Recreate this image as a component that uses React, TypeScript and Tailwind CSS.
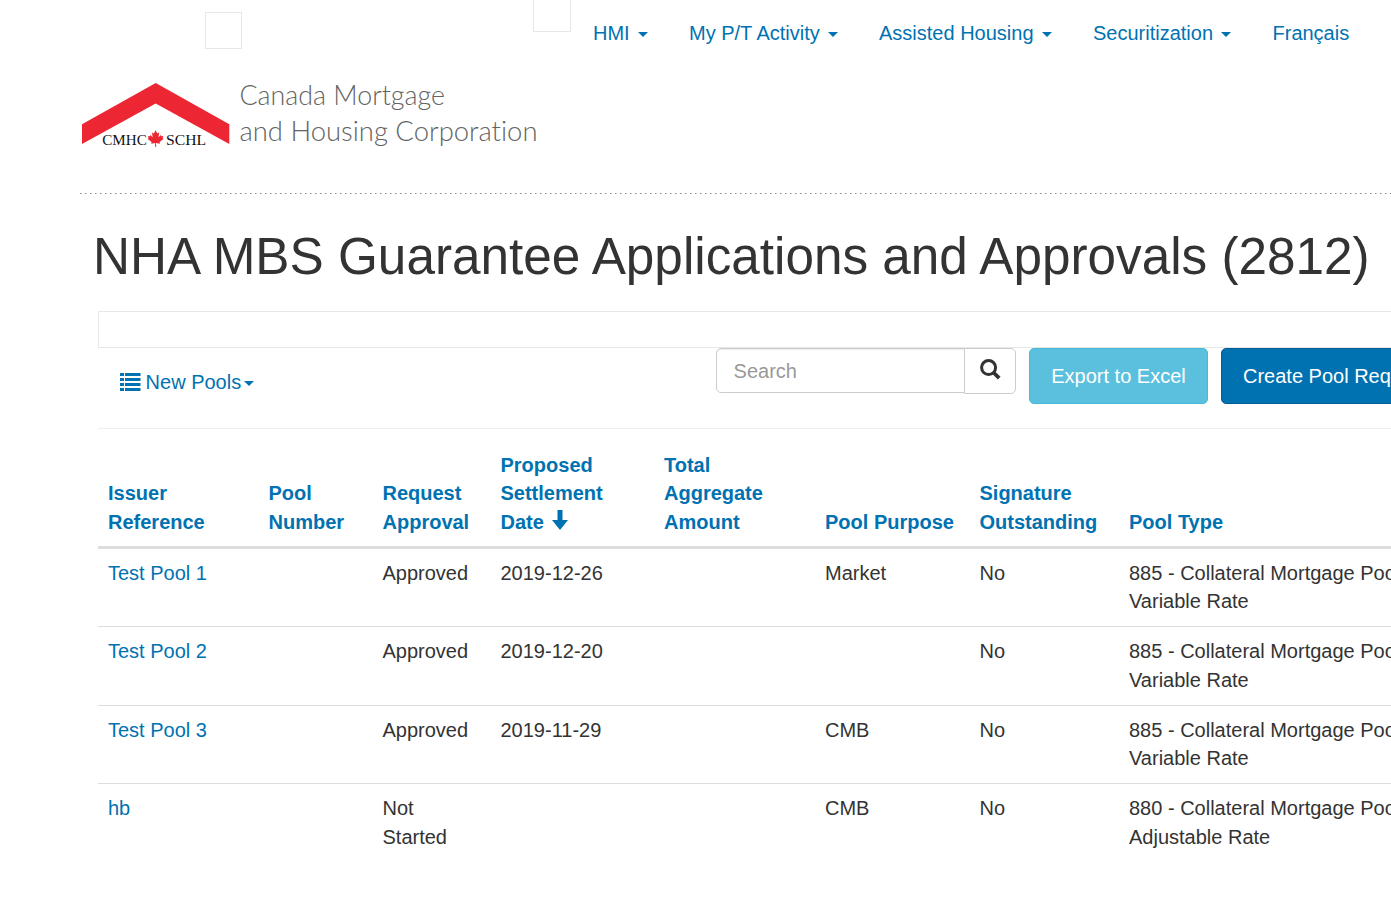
import React from "react";

const navItems = [
  { label: "HMI", menu: true, width: "w-[96px]" },
  { label: "My P/T Activity", menu: true, width: "w-[190px]" },
  { label: "Assisted Housing", menu: true, width: "w-[214px]" },
  { label: "Securitization", menu: true, width: "w-[179.5px]" },
  { label: "Français", menu: false, width: "w-[100px]" },
];

const rows = [
  { ref: "Test Pool 1", status: "Approved", date: "2019-12-26", purpose: "Market", signature: "No", type: "885 - Collateral Mortgage Pool -", rate: "Variable Rate" },
  { ref: "Test Pool 2", status: "Approved", date: "2019-12-20", purpose: "", signature: "No", type: "885 - Collateral Mortgage Pool -", rate: "Variable Rate" },
  { ref: "Test Pool 3", status: "Approved", date: "2019-11-29", purpose: "CMB", signature: "No", type: "885 - Collateral Mortgage Pool -", rate: "Variable Rate" },
  { ref: "hb", status: "Not Started", date: "", purpose: "CMB", signature: "No", type: "880 - Collateral Mortgage Pool -", rate: "Adjustable Rate" },
];

function Caret({ className = "" }: { className?: string }) {
  return (
    <svg className={`inline-block shrink-0 ${className}`} width="10" height="5" viewBox="0 0 10 5">
      <path d="M0 0H10L5 5Z" fill="currentColor" />
    </svg>
  );
}

function Logo() {
  return (
    <svg className="block [font-variant-ligatures:none]" width="460" height="76" viewBox="80 78 460 76">
      <path d="M82 124.3L155.7 83L229.3 124.3V144L155.7 103.4L82 144Z" fill="#ed2633" />
      <text x="102.3" y="144.7" fontFamily="'Liberation Serif', serif" fontSize="14" fill="#111" textLength="44.5" lengthAdjust="spacingAndGlyphs">CMHC</text>
      <text x="166" y="144.7" fontFamily="'Liberation Serif', serif" fontSize="14" fill="#111" textLength="40" lengthAdjust="spacingAndGlyphs">SCHL</text>
      <path
        d="M155.6 130.3L157.3 133.5L159.2 132.6L158.5 137.2L160.8 135.1L161.3 136.3L163.3 136L162.6 138.3L163.5 139L159.6 142.1L160 143.7L156 143.1L156.2 146.7H155L155.2 143.1L151.2 143.7L151.6 142.1L147.7 139L148.6 138.3L147.9 136L149.9 136.3L150.4 135.1L152.7 137.2L152 132.6L153.9 133.5Z"
        fill="#ed2633"
      />
      <text x="239.5" y="105" fontFamily="Lato, sans-serif" fontWeight="300" fontSize="28" fill="#636363" textLength="205.5" lengthAdjust="spacingAndGlyphs">Canada Mortgage</text>
      <text x="239.5" y="141" fontFamily="Lato, sans-serif" fontWeight="300" fontSize="28" fill="#636363" textLength="298" lengthAdjust="spacingAndGlyphs">and Housing Corporation</text>
    </svg>
  );
}

function ListIcon() {
  return (
    <svg className="shrink-0" width="21" height="18" viewBox="0 0 21 18" fill="#0072b1">
      <path d="M0 0h4v3H0zM5 0h15.5v3H5zM0 5h4v3H0zM5 5h15.5v3H5zM0 10h4v3H0zM5 10h15.5v3H5zM0 15h4v3H0zM5 15h15.5v3H5z" />
    </svg>
  );
}

export default function App() {
  return (
    <div className="h-[921px] w-[1391px] overflow-hidden bg-white text-[20px] leading-[28.57px] text-[#333] [font-family:'Liberation_Sans',Arial,sans-serif]">
      <header className="pl-20">
        <div className="flex h-[78px] items-start">
          <div className="ml-[125px] mt-3 h-[37px] w-[37px] shrink-0 border border-[#e7e7e7]" />
          <div className="ml-[291px] h-8 w-[38px] shrink-0 border border-t-0 border-[#e7e7e7]" />
          <nav className="ml-[22px] mt-[18.5px] flex shrink-0 text-[#0072b1]">
            {navItems.map((item) => (
              <a key={item.label} href="#" className={`flex shrink-0 items-center whitespace-nowrap ${item.width}`}>
                {item.label}
                {item.menu && <Caret className="ml-[8.2px] mt-[3px]" />}
              </a>
            ))}
          </nav>
        </div>
        <Logo />
        <svg className="mt-[39px] block" width="1311" height="1">
          <line x1="0" y1="0.5" x2="1311" y2="0.5" stroke="#888" strokeWidth="1" strokeDasharray="1.5 3.5" />
        </svg>
      </header>

      <main>
        <h1 className="mt-[33px] ml-[93px] h-[59px] whitespace-nowrap text-[51.28px] leading-[60px]">
          NHA MBS Guarantee Applications and Approvals (2812)
        </h1>

        <section className="ml-[98px] mt-[25px] w-[1400px]">
          <div className="h-[37px] border border-[#e7e7e7]" />
          <div className="flex h-[81px] items-start border-b border-[#eee]">
            <a href="#" className="flex w-[618px] items-center pl-[22px] pt-5 text-[#0072b1]">
              <ListIcon />
              <span className="ml-[4.6px]">New Pools</span>
              <Caret className="ml-[2.4px] mt-[3px]" />
            </a>
            <div className="flex w-[300px] items-start">
              <input
                placeholder="Search"
                className="h-[45px] w-[249px] rounded-l-[5px] border border-[#ccc] pt-[2px] pl-[16.6px] leading-[28px] shadow-[inset_0_1px_1px_rgba(0,0,0,0.075)] placeholder:text-[#999]"
              />
              <button className="-ml-px flex h-[46px] w-[52px] items-start justify-center rounded-r-[5px] border border-[#ccc] bg-white pt-[10px]">
                <svg width="21" height="21" viewBox="0 0 21 21" fill="none" stroke="#333">
                  <circle cx="8.6" cy="8.6" r="7" strokeWidth="3" />
                  <path d="M13.5 13.5L19.2 19.2" strokeWidth="3.8" strokeLinecap="butt" />
                </svg>
              </button>
            </div>
            <button className="ml-[13px] h-14 w-[179px] rounded-[5px] border border-[#46b8da] bg-[#5bc0de] text-white">Export to Excel</button>
            <button className="ml-[13px] h-14 w-[240px] rounded-[5px] border border-[#005f95] bg-[#0072b1] pl-[21px] text-left text-white">Create Pool Request</button>
          </div>

          <table className="w-[1400px] table-fixed border-separate border-spacing-0">
            <colgroup>
              <col className="w-[160.5px]" />
              <col className="w-[114px]" />
              <col className="w-[118px]" />
              <col className="w-[163.5px]" />
              <col className="w-[161px]" />
              <col className="w-[154.5px]" />
              <col className="w-[149.5px]" />
              <col />
            </colgroup>
            <thead>
              <tr className="h-[120px] text-left align-bottom text-[#0072b1] [&>th]:border-b-[3px] [&>th]:border-[#ddd] [&>th]:px-[10px] [&>th]:pb-[9.4px] [&>th]:align-bottom">
                <th>Issuer<br />Reference</th>
                <th>Pool<br />Number</th>
                <th>Request<br />Approval</th>
                <th>
                  Proposed<br />Settlement<br />Date{" "}
                  <svg className="ml-[3px] inline-block align-[-1px]" width="16" height="20" viewBox="0 0 16 20">
                    <path d="M5.5 0H10.5V10H16L8 20L0 10H5.5Z" fill="#0072b1" />
                  </svg>
                </th>
                <th>Total<br />Aggregate<br />Amount</th>
                <th>Pool Purpose</th>
                <th>Signature<br />Outstanding</th>
                <th>Pool Type</th>
              </tr>
            </thead>
            <tbody>
              {rows.map((row) => (
                <tr key={row.ref} className="h-[78.45px] [&>td]:border-b [&>td]:border-[#ddd] [&>td]:px-[10px] [&>td]:pt-[9.75px] [&>td]:align-top last:[&>td]:border-b-0">
                  <td><a href="#" className="text-[#0072b1]">{row.ref}</a></td>
                  <td />
                  <td>{row.status}</td>
                  <td>{row.date}</td>
                  <td />
                  <td>{row.purpose}</td>
                  <td>{row.signature}</td>
                  <td className="whitespace-nowrap">{row.type}<br />{row.rate}</td>
                </tr>
              ))}
            </tbody>
          </table>
        </section>
      </main>
    </div>
  );
}
